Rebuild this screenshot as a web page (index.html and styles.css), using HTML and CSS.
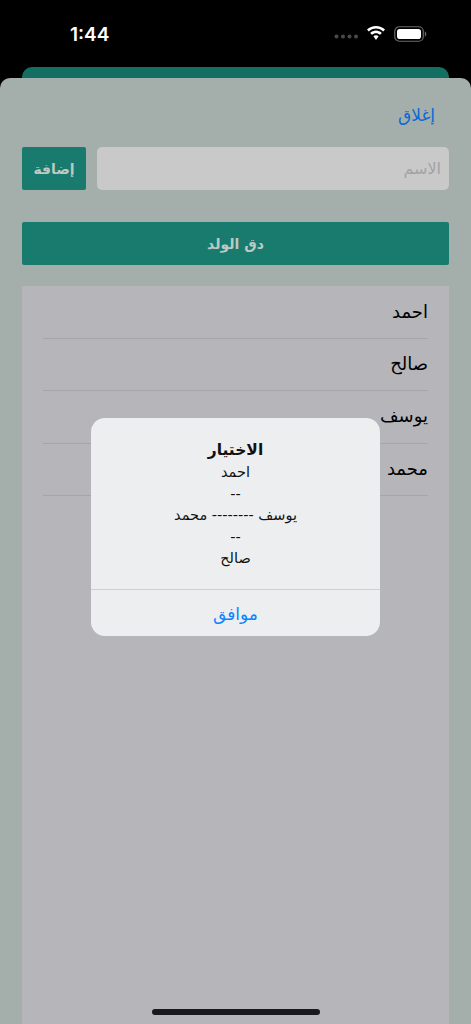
FILE: index.html
```html
<!DOCTYPE html>
<html lang="ar">
<head>
<meta charset="utf-8">
<title>الاختيار</title>
<link rel="stylesheet" href="styles.css">
</head>
<body>
<div class="phone">
  <header class="status">
    <span class="time">1:44</span>
    <div class="status-icons">
      <svg class="dots" width="24" height="5" viewBox="0 0 24 5"><g fill="#4a4a4a"><circle cx="2.5" cy="2.5" r="2"/><circle cx="9" cy="2.5" r="2"/><circle cx="15.500" cy="2.5" r="2"/><circle cx="22" cy="2.500" r="2"/></g></svg>
      <svg class="wifi" width="20" height="15" viewBox="0 0 20 15"><path fill="#fff" d="M10 2.600c2.800 0 5.300 1.100 7.200 2.900L19 3.600C16.600 1.400 13.500 0 10 0S3.400 1.400 1 3.600l1.800 1.900C4.700 3.700 7.200 2.600 10 2.600zM10 7.200c1.500 0 2.900.6 4 1.600l1.800-1.900C14.200 5.500 12.200 4.600 10 4.600S5.800 5.500 4.200 6.900L6 8.800c1.100-1 2.500-1.600 4-1.600zM10 9.300c-1 0-1.900.4-2.600 1L10 14l2.600-3.700c-.7-.6-1.600-1-2.600-1z"/></svg>
      <svg class="battery" width="33" height="16" viewBox="0 0 33 16"><rect x=".75" y=".75" width="28.500" height="14.500" rx="4.500" fill="none" stroke="#6a6a6a" stroke-width="1.200"/><rect x="3" y="3" width="24" height="10" rx="2.800" fill="#fff"/><path d="M30.800 5.500c1 .3 1.500 1.200 1.500 2.500s-.5 2.200-1.500 2.500z" fill="#6a6a6a"/></svg>
    </div>
  </header>
  <div class="peek"></div>
  <main class="sheet">
    <div class="close-row"><a class="close">إغلاق</a></div>
    <div class="add-row">
      <div class="name-field">الاسم</div>
      <button class="add-btn">إضافة</button>
    </div>
    <button class="tap-btn">دق الولد</button>
    <ul class="list">
      <li class="row"><span>احمد</span></li>
      <li class="row"><span>صالح</span></li>
      <li class="row"><span>يوسف</span></li>
      <li class="row"><span>محمد</span></li>
    </ul>
  </main>
  <div class="home-bar"></div>
  <section class="alert">
    <div class="alert-body">
      <h2 class="alert-title">الاختيار</h2>
      <p class="alert-line">احمد</p>
      <p class="alert-line">--</p>
      <p class="alert-line">يوسف -------- محمد</p>
      <p class="alert-line">--</p>
      <p class="alert-line">صالح</p>
    </div>
    <div class="alert-action">موافق</div>
  </section>
</div>
</body>
</html>
```
FILE: styles.css
```css
* { box-sizing: border-box; }
html, body { margin: 0; padding: 0; background: #000; }
body { font-family: "DejaVu Sans", "Noto Sans", sans-serif; }
.phone {
  position: relative;
  width: 471px;
  height: 1024px;
  overflow: hidden;
  background: #000;
  display: flex;
  flex-direction: column;
}
.status {
  height: 67px;
  flex: none;
  display: flex;
  justify-content: space-between;
  align-items: flex-start;
  padding: 23px 44px 0 70px;
}
.time {
  color: #fff;
  font-family: "Inter", "Liberation Sans", sans-serif;
  font-size: 19px;
  font-weight: 600;
  line-height: 23px;
}
.status-icons { display: flex; align-items: center; gap: 8px; padding-top: 3px; }
.dots { margin-top: 5px; }
.wifi { margin-top: -1px; }
.peek {
  height: 11px;
  flex: none;
  margin: 0 22px;
  background: #136f62;
  border-radius: 10px 10px 0 0;
}
.sheet {
  flex: 1;
  background: #a4aeaa;
  border-radius: 10px 10px 0 0;
  padding: 0 22px;
  display: flex;
  flex-direction: column;
}
.close-row { height: 69px; display: flex; justify-content: flex-end; align-items: flex-start; padding: 23px 14px 0 0; }
.close { color: #0a69d9; font-size: 17px; line-height: 28px; }
.add-row { display: flex; flex-direction: row-reverse; gap: 11px; height: 43px; }
.name-field {
  flex: 1;
  background: #c9c9c9;
  border-radius: 5px;
  color: #a3a3a3;
  direction: rtl;
  font-size: 16px;
  line-height: 43px;
  padding: 0 8px;
}
.add-btn, .tap-btn {
  border: 0;
  background: #197b6d;
  color: #bcc9c5;
  font-family: inherit;
  border-radius: 2px;
  padding: 0;
}
.add-btn { width: 64px; font-size: 14px; font-weight: 700; }
.tap-btn { height: 43px; margin-top: 32px; font-size: 14px; font-weight: 700; flex: none; }
.list {
  list-style: none;
  flex: 1;
  margin: 21px 0 0;
  padding: 0.500px 21px 0;
  background: #b6b5ba;
}
.row {
  height: 52.400px;
  border-bottom: 1px solid #a5a5aa;
  direction: rtl;
  color: #000;
  font-size: 18px;
  line-height: 49px;
}
.home-bar {
  position: absolute;
  left: 152px;
  top: 1009px;
  width: 168px;
  height: 6px;
  border-radius: 3px;
  background: #1a1a1c;
}
.alert {
  position: absolute;
  left: 91px;
  top: 418px;
  width: 289px;
  height: 218px;
  background: #edeef0;
  border-radius: 14px;
  display: flex;
  flex-direction: column;
  text-align: center;
  color: #111;
}
.alert-body { flex: none; height: 172px; border-bottom: 1px solid #cfcfd2; padding-top: 20px; }
.alert-title { margin: 0; font-size: 15.500px; font-weight: 700; line-height: 24px; }
.alert-line { margin: 0; font-size: 14.500px; line-height: 21.500px; }
.alert-action { flex: none; height: 46px; padding-top: 1px; color: #0a84ff; font-size: 17px; line-height: 47px; }
```
